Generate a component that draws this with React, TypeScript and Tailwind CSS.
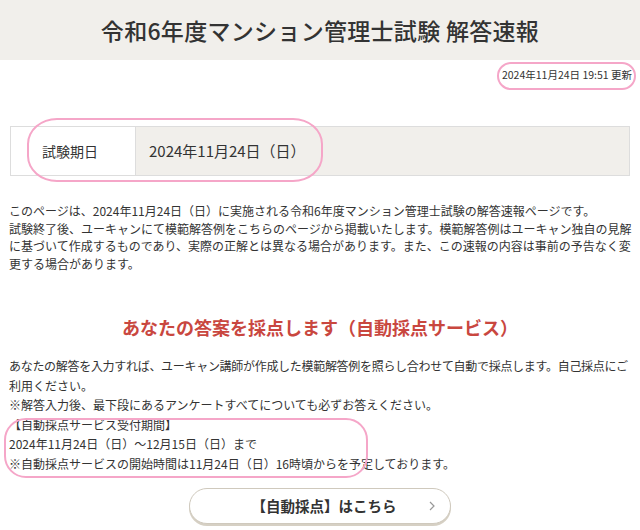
import React from "react";

const font = { fontFamily: '"Noto Sans CJK JP", "Noto Sans", sans-serif' };

export default function App() {
    return (
        <div className="relative w-[640px] h-[530px] overflow-hidden bg-white text-[#333]" style={font}>
            {/* Header */}
            <div className="h-[60px] bg-[#f1efeb] flex items-center justify-center">
                <h1 className="text-[23px] font-medium tracking-[0.3px] text-[#333]">
                    令和6年度マンション管理士試験 解答速報
                </h1>
            </div>

            <p className="mt-[8px] pr-[8px] text-right text-[10.5px] leading-[14px]">2024年11月24日 19:51 更新</p>

            {/* Exam date table */}
            <div className="mt-[44px] mx-[10px] flex h-[50px] border border-[#ddd]">
                <div className="w-[124px] bg-white flex items-center pl-[31px] text-[14px]">試験期日</div>
                <div className="flex-1 bg-[#f1efeb] border-l border-[#ddd] flex items-center pl-[13px] text-[15px]">
                    2024年11月24日（日）
                </div>
            </div>

            <div className="mt-[26px] px-[9px] text-[12px] leading-[17.5px] whitespace-nowrap">
                <p>このページは、2024年11月24日（日）に実施される令和6年度マンション管理士試験の解答速報ページです。</p>
                <p>試験終了後、ユーキャンにて模範解答例をこちらのページから掲載いたします。模範解答例はユーキャン独自の見解</p>
                <p>に基づいて作成するものであり、実際の正解とは異なる場合があります。また、この速報の内容は事前の予告なく変</p>
                <p>更する場合があります。</p>
            </div>

            <h2 className="mt-[42px] text-center text-[18px] leading-[26px] font-bold text-[#c9473f]">
                あなたの答案を採点します（自動採点サービス）
            </h2>

            <div className="mt-[16px] px-[9px] text-[12px] leading-[19.5px] whitespace-nowrap">
                <p className="tracking-[-0.3px]">あなたの解答を入力すれば、ユーキャン講師が作成した模範解答例を照らし合わせて自動で採点します。自己採点にご</p>
                <p>利用ください。</p>
                <p>※解答入力後、最下段にあるアンケートすべてについても必ずお答えください。</p>
                <p>【自動採点サービス受付期間】</p>
                <p>2024年11月24日（日）～12月15日（日）まで</p>
                <p>※自動採点サービスの開始時間は11月24日（日）16時頃からを予定しております。</p>
            </div>

            <div className="mt-[15px] flex justify-center">
                <button className="relative w-[262px] h-[36px] rounded-full border border-[#cfc9bd] bg-white shadow-[0_2px_0_#d6d0c4] flex items-center justify-center pl-[8px] text-[14.5px] font-bold text-[#333]">
                    【自動採点】はこちら
                    <span className="absolute right-[14px] top-1/2 -translate-y-1/2 text-[#999]">
                        <svg width="8" height="12" viewBox="0 0 8 12" fill="none" stroke="currentColor" strokeWidth="1.2">
                            <path d="M2 2l4 4-4 4" />
                        </svg>
                    </span>
                </button>
            </div>

            {/* Pink annotation ovals */}
            <div className="absolute left-[497px] top-[62px] w-[139px] h-[28px] rounded-[14px] border-[2.5px] border-[#f5a6c8]" />
            <div className="absolute left-[27px] top-[118px] w-[296px] h-[64px] rounded-[30px/26px] border-[2.5px] border-[#f5a6c8]" />
            <div className="absolute left-[4px] top-[418px] w-[364px] h-[60px] rounded-[22px] border-[2.5px] border-[#f5a6c8]" />
        </div>
    );
}
